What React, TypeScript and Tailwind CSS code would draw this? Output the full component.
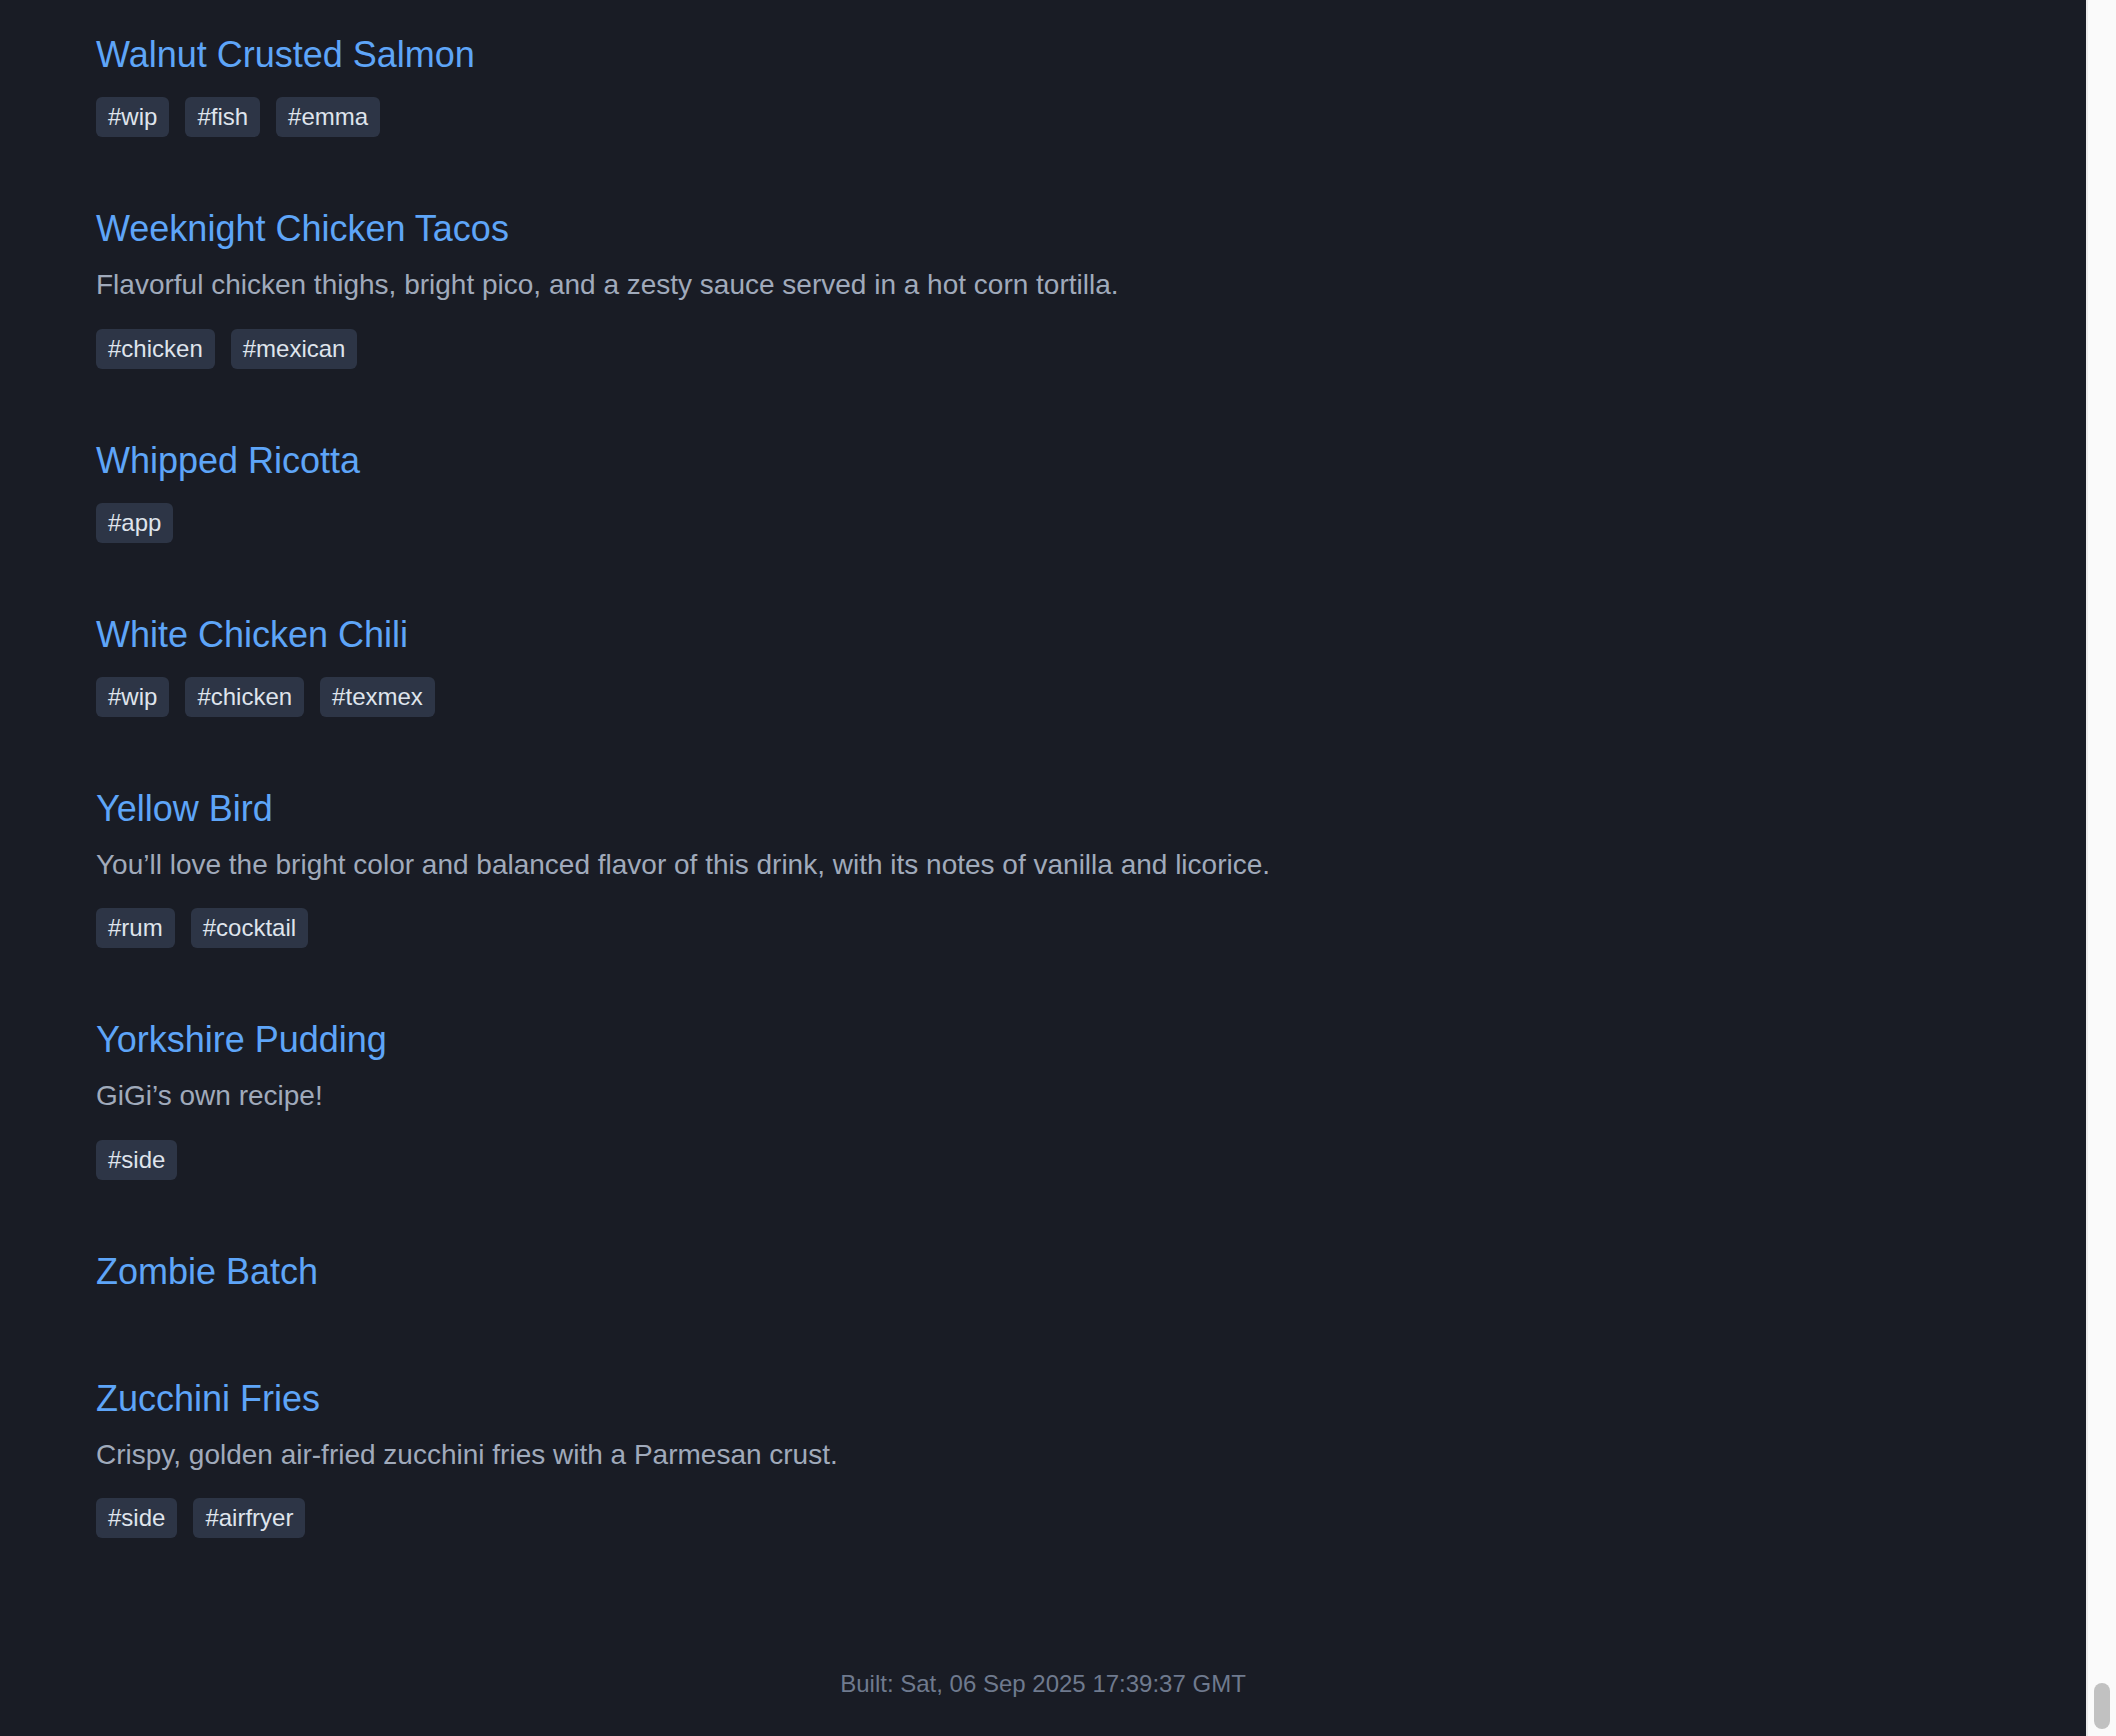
import React from "react";

type Recipe = { title: string; desc?: string; tags: string[] };

const recipes: Recipe[] = [
  { title: "Walnut Crusted Salmon", tags: ["wip", "fish", "emma"] },
  {
    title: "Weeknight Chicken Tacos",
    desc: "Flavorful chicken thighs, bright pico, and a zesty sauce served in a hot corn tortilla.",
    tags: ["chicken", "mexican"],
  },
  { title: "Whipped Ricotta", tags: ["app"] },
  { title: "White Chicken Chili", tags: ["wip", "chicken", "texmex"] },
  {
    title: "Yellow Bird",
    desc: "You\u2019ll love the bright color and balanced flavor of this drink, with its notes of vanilla and licorice.",
    tags: ["rum", "cocktail"],
  },
  { title: "Yorkshire Pudding", desc: "GiGi\u2019s own recipe!", tags: ["side"] },
  { title: "Zombie Batch", tags: [] },
  {
    title: "Zucchini Fries",
    desc: "Crispy, golden air-fried zucchini fries with a Parmesan crust.",
    tags: ["side", "airfryer"],
  },
];

function Item({ r }: { r: Recipe }) {
  return (
    <div className={r.tags.length ? "mb-[64px]" : "mb-[72px]"}>
      <a className="block pt-[1px] text-[36px] leading-[54px] text-[#5ea5f8]">{r.title}</a>
      {r.desc && (
        <p className="mt-[8px] text-[28px] leading-[42px] text-[#a0aabb]">{r.desc}</p>
      )}
      {r.tags.length > 0 && (
        <div className={`flex flex-wrap gap-[16px] ${r.desc ? "mt-[22.5px]" : "mt-[15px]"}`}>
          {r.tags.map((t) => (
            <span
              key={t}
              className="rounded-[6px] bg-[#2d3546] px-[12px] py-[6px] text-[24px] leading-[28px] text-[#dfe4ec]"
            >
              #{t}
            </span>
          ))}
        </div>
      )}
    </div>
  );
}

export default function App() {
  return (
    <div
      className="flex h-[1736px] w-full overflow-hidden bg-[#191c25]"
      style={{ fontFamily: '"Liberation Sans", Arial, Helvetica, sans-serif' }}
    >
      <main className="flex min-w-0 flex-1 flex-col pt-[27px]">
        <div className="px-[96px]">
          {recipes.map((r) => (
            <Item key={r.title} r={r} />
          ))}
        </div>
        <footer className="mt-[64px] text-center text-[24px] leading-[36px] text-[#6f7a8e]">
          Built: Sat, 06 Sep 2025 17:39:37 GMT
        </footer>
      </main>
      <aside className="flex w-[30px] shrink-0 flex-col justify-end border-l-2 border-[#ebebeb] bg-[#fafafa]">
        <div className="mb-[7px] ml-[6px] h-[46px] w-[16px] rounded-full bg-[#c1c1c1]" />
      </aside>
    </div>
  );
}
